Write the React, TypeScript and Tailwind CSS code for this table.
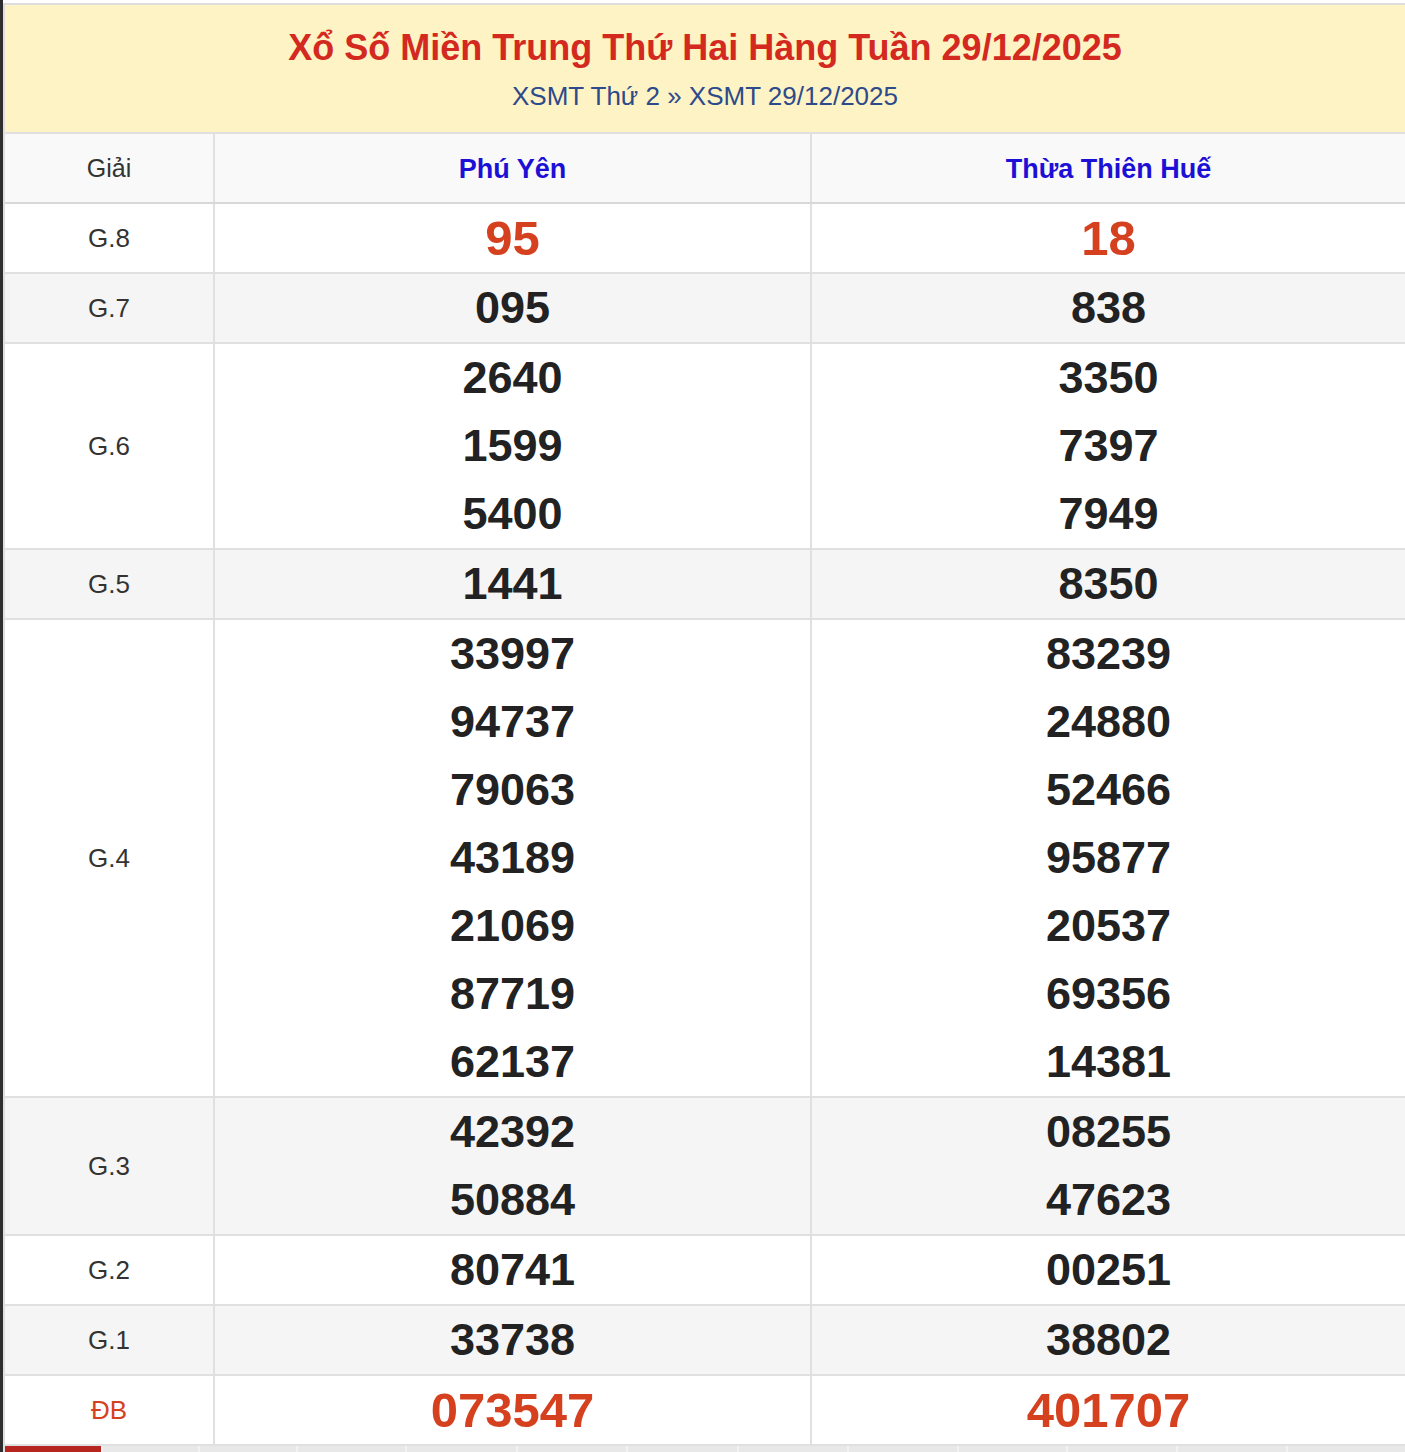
import React from "react";

type Row = {
  label: string;
  left: string[];
  right: string[];
  shaded?: boolean;
  red?: boolean;
};

const rows: Row[] = [
  { label: "G.8", left: ["95"], right: ["18"], red: true },
  { label: "G.7", left: ["095"], right: ["838"], shaded: true },
  { label: "G.6", left: ["2640", "1599", "5400"], right: ["3350", "7397", "7949"] },
  { label: "G.5", left: ["1441"], right: ["8350"], shaded: true },
  {
    label: "G.4",
    left: ["33997", "94737", "79063", "43189", "21069", "87719", "62137"],
    right: ["83239", "24880", "52466", "95877", "20537", "69356", "14381"],
  },
  { label: "G.3", left: ["42392", "50884"], right: ["08255", "47623"], shaded: true },
  { label: "G.2", left: ["80741"], right: ["00251"] },
  { label: "G.1", left: ["33738"], right: ["38802"], shaded: true },
  { label: "ĐB", left: ["073547"], right: ["401707"], red: true },
];

// widths of the tabs peeking in at the bottom of the page
const tabs = [98, 98, 110, 111, 111, 111, 111, 110, 110, 110, 110, 120];

function Numbers({ values, red }: { values: string[]; red?: boolean }) {
  return (
    <div className="flex flex-col items-center">
      {values.map((v, i) => (
        <div
          key={i}
          className={
            red
              ? "h-[68px] leading-[68px] text-[49px] font-bold text-[#d5411f]"
              : "h-[68px] leading-[68px] text-[45px] font-bold text-[#222222]"
          }
        >
          {v}
        </div>
      ))}
    </div>
  );
}

export default function App() {
  return (
    <div
      className="w-[1405px] h-[1452px] overflow-hidden bg-white border-l-[3px] border-[#2e2e2e] pt-[3px]"
      style={{ fontFamily: '"Liberation Sans", Arial, sans-serif' }}
    >
      <div className="border-l-2 border-t-2 border-[#dedede]">
        {/* Title block */}
        <div className="h-[127px] bg-[#fdf3c4] flex flex-col items-center pt-[22px]">
          <h1 className="text-[36px] leading-[42px] font-bold text-[#d3291e]">
            Xổ Số Miền Trung Thứ Hai Hàng Tuần 29/12/2025
          </h1>
          <div className="text-[26px] leading-[30px] mt-[12px] text-[#2d4a8a]">
            XSMT Thứ 2 » XSMT 29/12/2025
          </div>
        </div>

        {/* Header row */}
        <div className="grid grid-cols-[208px_597px_1fr] border-t-2 border-[#e0e0e0] bg-[#f9f9f9]">
          <div className="h-[68px] pt-[2px] flex items-center justify-center text-[25px] text-[#333333]">Giải</div>
          <div className="h-[68px] pt-[2px] flex items-center justify-center border-l-2 border-[#e0e0e0] text-[27px] font-bold text-[#1c10d6]">
            Phú Yên
          </div>
          <div className="h-[68px] pt-[2px] flex items-center justify-center border-l-2 border-[#e0e0e0] text-[27px] font-bold text-[#1c10d6]">
            Thừa Thiên Huế
          </div>
        </div>

        {/* Result rows */}
        {rows.map((row, idx) => (
          <div
            key={row.label}
            className={
              (idx === 0 ? "border-[#d8d8d8] " : "border-[#e0e0e0] ") +
              "grid grid-cols-[208px_597px_1fr] border-t-2 " +
              (row.shaded ? "bg-[#f5f5f5]" : "bg-white")
            }
          >
            <div
              className={
                row.label === "ĐB"
                  ? "flex items-center justify-center text-[26px] text-[#d5411f]"
                  : "flex items-center justify-center text-[26px] text-[#333333]"
              }
            >
              {row.label}
            </div>
            <div className="border-l-2 border-[#e0e0e0]">
              <Numbers values={row.left} red={row.red} />
            </div>
            <div className="border-l-2 border-[#e0e0e0]">
              <Numbers values={row.right} red={row.red} />
            </div>
          </div>
        ))}

        {/* Tabs below the table */}
        <div className="flex border-t-2 border-[#e0e0e0] h-[40px] bg-[#f2f2f2]">
          <div className="w-[96px] bg-[#b7261e]" />
          {tabs.map((w, i) => (
            <div key={i} className="ml-[2px] bg-[#e8e8e8]" style={{ width: w - 2 }} />
          ))}
        </div>
      </div>
    </div>
  );
}
